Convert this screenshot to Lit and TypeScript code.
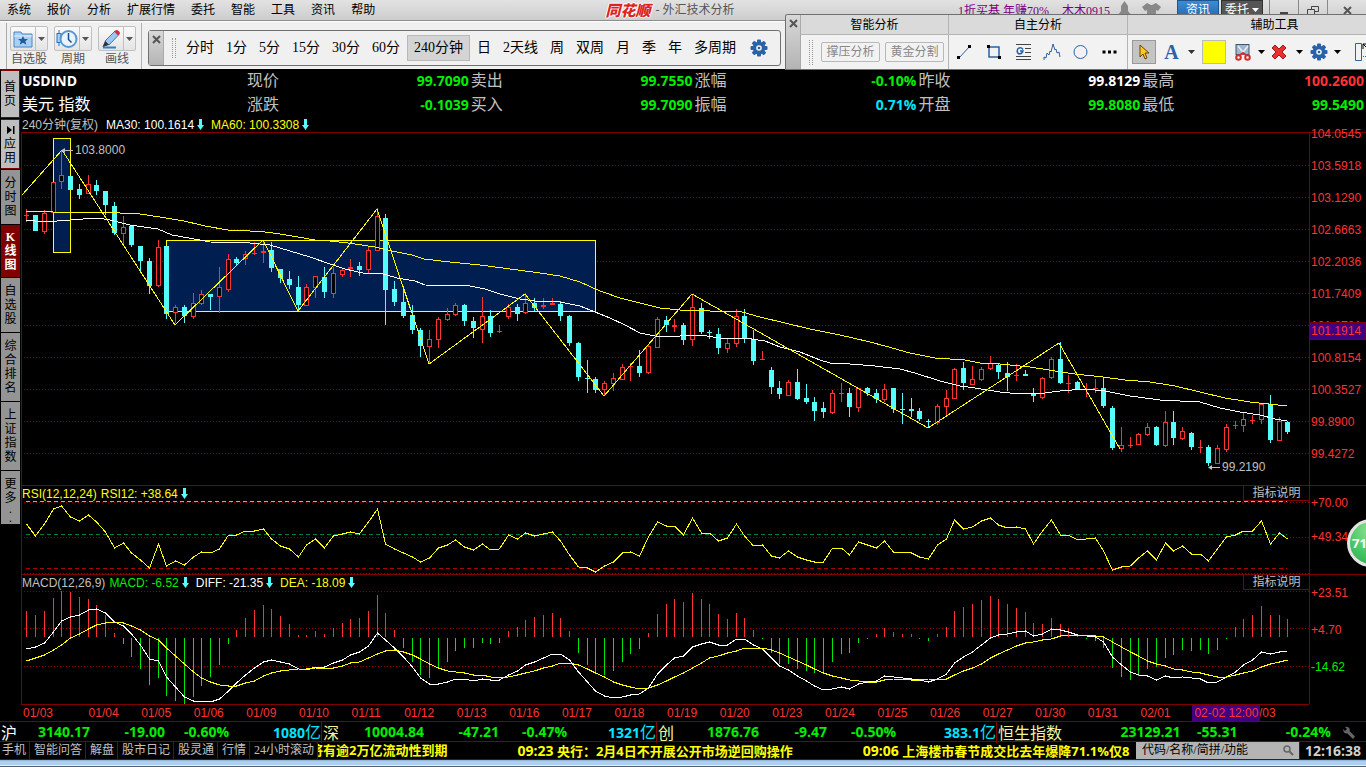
import { LitElement, html, svg, css } from "lit";
import { customElement } from "lit/decorators.js";
import { classMap } from "lit/directives/class-map.js";
import { styleMap } from "lit/directives/style-map.js";

/* Bar geometry shared by the three panes. */
const LEFT = 22;
const WIDTH = 1287;
const barX = (i: number) => Math.floor(26.75 + i * 8.757);

/* Each candle: rising flag, wick top, body top, body bottom, wick bottom. */
const CANDLES: number[][] = [
  [1,209,215,216,222],[0,215,215,231,231],[1,210,213,231,234],[1,182,182,212,212],[1,151,175,181,189],
  [0,176,176,190,190],[0,184,189,195,199],[1,175,184,193,193],[0,180,185,191,195],[0,191,191,205,215],
  [0,202,206,233,235],[1,216,227,233,246],[0,225,226,245,247],[0,246,246,261,272],[0,258,261,286,294],
  [1,240,247,285,287],[0,246,246,314,319],[1,305,307,312,323],[0,305,307,316,323],[1,293,303,316,319],
  [1,290,294,303,305],[0,294,294,297,310],[1,267,287,296,313],[1,254,259,289,292],[0,257,259,263,265],
  [1,251,254,258,265],[1,242,253,254,255],[1,240,251,253,263],[0,242,250,268,272],[0,269,269,278,283],
  [0,271,279,285,289],[0,276,287,305,310],[1,284,287,305,306],[1,276,276,287,298],[0,267,277,292,298],
  [1,267,273,293,298],[1,269,270,274,277],[1,259,267,269,277],[0,262,266,270,276],[1,247,250,269,274],
  [1,208,216,250,251],[0,214,218,290,325],[0,281,289,302,306],[0,286,302,316,318],[0,305,315,330,334],
  [0,328,330,346,357],[1,330,339,346,364],[1,317,319,339,348],[1,308,314,319,321],[1,303,305,314,316],
  [0,304,305,321,326],[0,317,321,328,338],[1,297,316,329,343],[0,310,316,333,337],[1,325,331,332,333],
  [1,304,307,316,319],[0,304,307,314,321],[1,293,303,312,314],[0,298,303,308,311],[1,298,305,307,309],
  [1,298,303,305,305],[0,301,304,316,321],[0,315,316,343,346],[0,342,343,377,381],[0,360,378,379,393],
  [0,377,379,390,393],[1,381,383,389,396],[1,373,378,383,391],[1,364,367,379,380],[1,363,366,367,381],
  [0,350,366,373,377],[1,344,346,372,374],[1,317,319,347,348],[0,316,320,325,332],[1,319,325,327,332],
  [0,323,325,340,345],[1,295,307,339,346],[0,303,308,332,334],[0,330,332,333,339],[0,328,334,348,354],
  [1,339,343,348,353],[1,309,316,343,347],[0,309,316,339,343],[0,330,339,361,365],[1,351,359,360,360],
  [0,367,370,387,394],[0,381,388,394,399],[1,380,382,395,395],[0,369,382,399,400],[0,384,398,402,404],
  [0,397,402,411,421],[0,402,408,412,418],[1,390,393,412,414],[1,383,393,394,402],[0,388,393,407,417],
  [1,388,388,407,412],[0,387,388,393,396],[0,389,393,399,403],[1,384,389,399,402],[0,388,388,409,413],
  [0,393,409,410,424],[0,398,409,411,417],[0,408,411,419,421],[0,419,421,422,427],[1,404,406,422,425],
  [1,390,398,406,416],[1,368,369,398,399],[0,362,368,383,390],[1,366,379,384,384],[1,367,369,379,381],
  [1,356,363,368,370],[0,363,365,372,379],[0,362,373,377,391],[1,364,375,376,381],[0,370,374,376,376],
  [0,388,394,396,402],[1,377,378,397,399],[1,357,359,377,379],[0,342,359,383,384],[1,375,383,384,393],
  [0,381,382,390,390],[1,383,389,390,397],[1,379,388,389,393],[0,377,388,406,408],[0,406,408,448,450],
  [1,427,445,448,452],[1,437,445,446,448],[1,433,434,444,444],[1,423,427,434,436],[0,426,427,445,446],
  [1,411,422,445,447],[0,411,422,438,445],[1,427,431,438,440],[0,432,433,447,450],[1,440,447,448,453],
  [0,445,447,463,466],[1,445,448,463,464],[1,424,427,449,452],[1,421,425,426,429],[1,413,419,425,432],
  [1,415,420,421,424],[1,403,404,419,424],[0,395,404,440,443],[1,417,421,440,441],[0,421,422,432,434],
];

const MA60 =
  "26,211 40,211 53,212 114,212 120,213 140,214 160,217 184,221 205,226 228,230 250,231 265,232 280,234 298,237 315,240 330,241 348,243 375,247 392,251 412,255 424,259 450,262 480,265 510,269 540,273 560,276 580,282 600,291 620,298 640,303 660,308 680,310 710,311 742,312 760,317 785,323 810,329 840,335 870,342 885,346 910,353 935,358 965,360 980,363 1000,364 1030,367 1055,371 1075,374 1103,377 1125,380 1150,382 1175,386 1200,392 1225,398 1250,402 1287,406";
const MA30 =
  "26,220 44,222 70,220 97,218 110,220 130,225 158,229 172,235 200,240 210,242 250,243 270,245 290,251 310,257 330,264 345,269 367,274 380,273 397,278 415,281 425,285 470,286 485,289 500,294 520,299 535,301 560,302 580,306 595,312 610,318 625,325 640,333 655,336 680,336 700,335 720,338 745,338 765,341 780,347 800,352 820,360 830,363 850,364 875,366 900,369 915,373 940,381 960,386 975,388 1000,392 1020,394 1045,393 1060,391 1085,389 1105,391 1130,396 1160,400 1200,402 1220,408 1240,412 1260,415 1275,419 1287,421";
const ZIGZAG =
  "22,195 62,150 175,325 263,240 298,311 377,209 429,364 525,294 604,396 692,294 928,428 1059,343 1120,449";

/* Indicator series: three units to a pixel, measured down from y = 480. */
const RSI = [132,169,132,86,77,111,124,106,126,156,203,190,219,239,265,193,257,244,254,230,217,220,206,164,166,154,154,148,178,197,206,232,196,178,203,167,163,157,163,125,86,192,206,219,232,247,233,203,196,181,201,211,191,211,208,166,178,160,169,163,157,184,226,262,265,276,257,247,220,217,229,172,127,139,139,166,115,160,160,184,175,133,169,199,196,229,235,214,231,239,247,247,205,205,226,187,196,205,184,217,217,220,232,238,196,176,119,148,142,124,115,136,145,142,146,193,152,119,166,166,181,178,175,214,271,262,259,233,214,241,190,214,199,223,223,244,208,170,166,154,154,124,193,160,176];
const HIST = [393,405,393,354,333,336,351,357,375,405,459,489,528,564,612,591,645,660,672,648,615,588,552,489,450,414,390,375,387,408,432,465,465,453,462,444,429,417,414,393,345,399,450,501,543,582,591,564,543,510,501,501,486,489,486,453,441,420,411,405,399,414,453,516,552,579,582,570,543,519,504,459,402,372,357,366,339,357,372,402,417,399,414,450,474,516,549,549,564,570,576,573,543,519,516,486,474,462,444,456,462,462,474,480,462,441,393,381,372,360,348,357,372,384,396,429,432,414,432,444,465,474,480,501,561,588,597,585,564,558,531,522,507,510,507,519,507,474,441,417,405,378,405,405,417];
const DIFF = [506,502,488,456,424,410,404,391,388,399,426,439,463,495,538,542,592,622,652,664,664,667,658,632,610,584,563,546,541,545,551,568,569,560,562,550,539,526,516,499,458,480,503,530,560,593,613,613,607,598,598,602,596,601,601,584,574,556,547,535,523,523,541,577,606,634,649,655,652,646,643,624,583,556,535,529,500,492,487,496,496,478,478,496,506,535,559,571,589,604,619,631,628,622,626,613,605,602,589,592,595,596,601,605,597,581,550,532,517,496,474,466,463,457,454,467,463,448,451,457,464,467,472,487,530,556,577,586,587,599,589,593,590,595,598,610,607,590,575,556,541,517,523,515,514];
const DEA = [542,533,524,509,494,475,462,448,436,428,427,430,437,449,467,479,503,527,553,575,594,607,616,619,618,610,602,589,580,572,569,568,568,565,565,563,557,550,545,535,521,512,510,515,524,537,551,564,572,577,580,586,586,590,593,590,586,580,574,565,559,550,550,556,566,579,592,606,616,622,626,625,616,604,592,578,563,548,535,529,520,514,505,505,505,511,520,530,542,554,567,580,589,595,601,604,605,605,601,598,598,599,599,598,598,596,586,574,565,551,535,523,511,499,490,485,481,476,469,466,466,466,467,472,486,500,515,529,542,553,559,566,571,575,580,586,590,590,586,580,574,562,553,547,541];

const levelY = (v: number) => 480 + Math.round(v / 3);
const series = (values: number[]) =>
  values.map((v, i) => `${barX(i) + 0.5},${levelY(v)}`).join(" ");

const dotted = (y: number) =>
  svg`<line class="dot" x1="24" x2="1309" y1=${y + 0.5} y2=${y + 0.5}></line>`;
const dashed = (y: number, cls: string) =>
  svg`<line class="dash ${cls}" x1="26" x2="1287" y1=${y + 0.5} y2=${y + 0.5}></line>`;

const candle = ([up, high, top, bottom, low]: number[], i: number) => {
  const x = barX(i);
  const flat = bottom - top <= 2;
  const body = up && !flat
    ? svg`<rect class="rise" x=${x - 1.5} y=${top + 0.5} width="4" height=${bottom - top}></rect>`
    : svg`<rect class=${up ? "rise-flat" : "fall"} x=${x - 2} y=${top} width="5" height=${bottom - top}></rect>`;
  return svg`<line class=${up ? "wick-up" : "wick-down"} x1=${x + 0.5} x2=${x + 0.5} y1=${high} y2=${low}></line>${body}`;
};

/* Cog with eight teeth. */
const gear = () => html`<svg class="icon" width="18" height="18" viewBox="-9 -9 18 18" aria-hidden="true">
  <g fill="#2a62a8">${[0, 45, 90, 135].map((a) => svg`<rect x="-2" y="-8.5" width="4" height="17" rx="1" transform="rotate(${a})"></rect>`)}
  <circle r="6.3"></circle></g><circle r="2.8" fill="#f4f4f4"></circle><circle r="1.3" fill="#2a62a8"></circle></svg>`;
const caret = () => html`<svg width="7" height="4" viewBox="0 0 7 4" aria-hidden="true"><path d="M0 0h7L3.5 4z" fill="currentColor"></path></svg>`;
const downArrow = () => html`<svg width="7" height="11" viewBox="0 0 7 11" aria-hidden="true"><path d="M2 0h3v6h2L3.5 11 0 6h2z" fill="#54fcfc"></path></svg>`;
const cross = () => html`<svg width="9" height="9" viewBox="0 0 9 9" aria-hidden="true"><path d="M1 1l7 7M8 1L1 8" stroke="#555" stroke-width="2"></path></svg>`;

const MENUS = ["系统", "报价", "分析", "扩展行情", "委托", "智能", "工具", "资讯", "帮助"];
const PERIODS = ["分时", "1分", "5分", "15分", "30分", "60分", "240分钟", "日", "2天线", "周", "双周", "月", "季", "年", "多周期"];
const TABS: [string, string][] = [
  ["首页", "light tall"], ["⏵应用", "light"], ["分时图", ""], ["K线图", "on"],
  ["自选股", ""], ["综合排名", ""], ["上证指数", ""], ["更多..", "more"],
];
const QUOTES = [
  ["现价", "99.7090", "green"], ["卖出", "99.7550", "green"], ["涨幅", "-0.10%", "green"], ["昨收", "99.8129", "white"], ["最高", "100.2600", "red"],
  ["涨跌", "-0.1039", "green"], ["买入", "99.7090", "green"], ["振幅", "0.71%", "cyan"], ["开盘", "99.8080", "green"], ["最低", "99.5490", "green"],
];
const PRICES = ["104.0545", "103.5918", "103.1290", "102.6663", "102.2036", "101.7409", "101.2781", "100.8154", "100.3527", "99.8900", "99.4272"];
const DATES = ["01/03", "01/04", "01/05", "01/06", "01/09", "01/10", "01/11", "01/12", "01/13", "01/16", "01/17", "01/18", "01/19", "01/20", "01/23", "01/24", "01/25", "01/26", "01/27", "01/30", "01/31", "02/01", "02/02", "02/03"];
const INDICES = [
  { name: "沪", tone: "white", cells: ["3140.17", "-19.00", "-0.60%"], vol: "1080", cols: "90fr 75fr 64fr 92fr" },
  { name: "深", tone: "pale", cells: ["10004.84", "-47.21", "-0.47%"], vol: "1321", cols: "102fr 75fr 68fr 89fr" },
  { name: "创", tone: "pale", cells: ["1876.76", "-9.47", "-0.50%"], vol: "383.1", cols: "102fr 68fr 69fr 100fr" },
  { name: "恒生指数", tone: "pale", cells: ["23129.21", "-55.31", "-0.24%"], vol: "", cols: "183fr 57fr 93fr 35fr" },
];
const LINKS = ["手机", "智能问答", "解盘", "股市日记", "股灵通", "行情", "24小时滚动"];

@customElement("app-root")
export class AppRoot extends LitElement {
  static styles = css`
    :host {
      display: block;
      background: #000;
      color: #c0c0c0;
      font: 12px/16px "Liberation Sans", "Noto Sans CJK SC", sans-serif;
      overflow: hidden;
    }
    * { box-sizing: border-box; }
    button { font: inherit; color: inherit; background: none; border: 0; padding: 0; margin: 0; }
    a { color: inherit; text-decoration: none; }
    svg { display: block; }
    .page { position: relative; display: flex; flex-direction: column; min-height: 100vh; overflow: hidden; }
    .green { color: #00ee00; } .red { color: #ff3232; } .cyan { color: #00e5ff; }
    .white { color: #fff; } .pale { color: #f4f49c; } .yellow { color: #ffff00; } .grey { color: #c0c0c0; }

    /* title bar */
    .top { display: flex; justify-content: space-between; height: 21px; background: linear-gradient(#e2e2e2, #cdcdcd); border-bottom: 1px solid #8c8c8c; color: #000;
      font-family: "Liberation Serif", "Noto Sans CJK SC", serif; }
    .menus { display: flex; gap: 16px; padding: 2px 7px; flex: 1; }
    .title { display: flex; gap: 5px; color: #555; align-items: center; margin-right: 40px; }
    .logo { font: italic 900 15px/18px "Noto Sans CJK SC", sans-serif; color: #dc2420; text-shadow: 1px 0 #fff, -1px 0 #fff, 0 1px #fff, 0 -1px #fff; }
    .sys { display: flex; flex: 1; justify-content: flex-end; align-items: flex-start; }
    .promo { color: #800080; padding: 3px 0; margin-right: 13px; white-space: nowrap; }
    .account { margin-right: 8px; }
    .shirt { margin: 0 16px 0 11px; }
    .badge { height: 20px; width: 42px; color: #fff; margin-right: 2px; background: linear-gradient(#3f8bd0, #2265ab); border: 1px solid #1c5590; }
    .badge.dark { background: #555; border-color: #333; display: flex; align-items: center; justify-content: center; gap: 3px; }
    .win { width: 29px; height: 21px; border-left: 1px solid #888; display: grid; place-items: center; }
    .win.first { margin-left: 4px; }
    .win.last { width: 39px; }

    /* tool bar */
    .tools { display: flex; height: 48px; background: #f0f0f0; color: #000; padding-top: 1px; border-top: 1px solid #fff; }
    .groups { display: flex; gap: 6px; padding: 3px 5px 0 3px; margin-left: 6px; border-left: 1px solid #aaa; border-right: 1px solid #b4b4b4; }
    .group { display: flex; flex-direction: column; align-items: center; color: #555; line-height: 17px; }
    .split { display: flex; width: 38px; height: 25px; border: 1px solid #c0c0c0; border-radius: 2px; background: linear-gradient(#fafafa, #e4e4e4); }
    .split button { flex: 1; display: grid; place-items: center; }
    .split button:first-child { flex: 0 0 25px; border-right: 1px solid #c0c0c0; }
    .periods { display: flex; align-items: center; height: 36px; margin: 7px 0 0 6px; border: 1px solid #707070; border-radius: 3px; font: 14px/22px "Liberation Serif", "Noto Sans CJK SC", serif; padding-right: 12px; }
    .close { flex: none; align-self: stretch; width: 15px; background: linear-gradient(#d8d8d8, #b4b4b4); border-right: 1px solid #aaa; display: flex; justify-content: center; padding-top: 4px; }
    .grip { width: 4px; height: 20px; margin: 0 4px 0 8px; border: dotted #999; border-width: 0 1px; }
    .period { padding: 0 6px; height: 26px; white-space: nowrap; }
    .period.on { background: #d4d4d4; border: 1px solid #b8b8b8; margin: 0 1px; }
    .cog { margin-left: 8px; }

    /* drawing palette, floats over the title and tool bars */
    .palette { position: absolute; right: 0; top: 14px; width: 581px; height: 56px; display: flex; overflow: hidden; background: #f2f2f2; color: #000; border: 1px solid #707070; border-right: 0; border-radius: 3px 0 0 0;
      font-family: "Liberation Serif", "Noto Sans CJK SC", serif; }
    .sec { flex: none; border-right: 1px solid #b4b4b4; }
    .sec h2 { margin: 0; font: inherit; line-height: 20px; text-align: center; background: #dadada; border-bottom: 1px solid #b4b4b4; height: 20px; }
    .sec.a { width: 148px; } .sec.b { width: 179px; } .sec.c { width: 294px; }
    .row { display: flex; align-items: center; height: 34px; }
    .a .row { gap: 5px; } .a .grip { margin: 0 3px 0 8px; height: 25px; }
    .ghost { border: 1px solid #b8b8b8; border-radius: 2px; color: #888; width: 59px; height: 20px; line-height: 16px; }
    .b .row { gap: 11px; padding-left: 7px; }
    .c .row { padding-left: 4px; }
    .c button { display: grid; place-items: center; height: 24px; }
    .pick { width: 24px; background: #c4c4c4; border: 1px solid #999; }
    .letter { width: 31px; font: bold 20px/20px "Liberation Serif", serif; color: #2a62a8; }
    .swatch { width: 24px; margin: 0 7px; background: #ff0; border: 1px solid #bbb; }
    .drop { width: 8px; color: #333; }
    .w16 { width: 16px; } .w20 { width: 20px; }
    .ruler { margin-left: 10px; }

    /* main area */
    .body { display: flex; }
    .tabs { display: flex; flex-direction: column; gap: 1px; width: 21px; flex: none; padding-left: 1px; border-top: 1px solid #800000; }
    .tab { width: 19px; padding: 6px 0; background: #949494; color: #000; line-height: 14px; }
    .tab span { display: block; height: 14px; }
    .tab.light { background: #bebebe; border: 1px solid #800000; border-left: 0; padding: 3px 0; }
    .tab.tall { padding: 9px 0; }
    .tab.on { background: #800000; color: #fff; font-family: "Liberation Serif", "Noto Sans CJK SC", serif; font-weight: bold; padding: 5px 0; }
    .tab.more span:nth-child(n+3) { height: 9px; line-height: 9px; }
    .tab.more { padding-bottom: 1px; }
    .view { flex: 1; min-width: 0; }
    .quotes { display: grid; grid-template-columns: 225px repeat(5, 1fr); padding-left: 1px; font-size: 16px; line-height: 24px; }
    .name { color: #fff; }
    .name.code { font: bold 14px/24px "Open Sans", sans-serif; }
    .quote { display: flex; justify-content: space-between; padding-right: 2px; }
    .num { font: bold 14px/24px "Open Sans", sans-serif; }
    .legend { display: flex; align-items: center; height: 15px; padding-left: 1px; white-space: nowrap; }
    .legend.over { position: absolute; left: 0; top: 0; padding: 0; }
    .legend span { display: flex; align-items: center; gap: 3px; margin-right: 7px; }
    .legend .tight { margin-right: 4px; }
    .legend .wide { margin-right: 8px; }
    .pane { display: grid; grid-template-columns: 1fr 57px; border-top: 1px solid #800000; border-left: 1px solid #800000; }
    .plot { position: relative; min-width: 0; }
    .plot > svg { width: 100%; height: 100%; shape-rendering: crispEdges; }
    .price { height: 353px; } .rsi { height: 89px; } .macd { height: 130px; }
    .axis { border-left: 1px solid #800000; position: relative; color: #ff3232; padding-left: 1px; }
    .axis span { display: block; }
    .price .axis { margin-top: -16px; border: 0; padding-left: 2px; line-height: 34px; }
    .price .axis span { height: 32px; }
    .price .plot { border-right: 1px solid #800000; margin-right: -1px; }
    .rsi .axis span { line-height: 34px; }
    .macd .axis span { line-height: 37px; }
    .price .axis .cursor { position: absolute; left: 0; right: 0; top: 205px; height: 18px; line-height: 16px; padding-left: 1px; background: #400080; border: 1px solid #800000; }
    .help { position: absolute; right: 0; top: 0; width: 66px; height: 15px; border-left: 1px solid #800000; border-bottom: 1px solid #800000; line-height: 14px; background: #000; }
    .note { position: absolute; line-height: 14px; display: flex; align-items: center; gap: 2px; }
    .dates { display: flex; position: relative; height: 17px; margin-right: 57px; padding-left: 2px; border: 1px solid #800000; border-width: 1px 0 0 0; color: #ff3232; line-height: 17px; }
    .dates span { flex: 0 0 4.09%; }
    .dates span:first-child { flex-basis: 5.1%; }
    .dates .cursor { position: absolute; left: 90.95%; top: 0; width: 68px; height: 16px; background: #400080; text-align: center; white-space: nowrap; font-weight: normal; }

    .dot { stroke: #900000; stroke-dasharray: 1 2; }
    .dash { stroke-dasharray: 4 3; }
    .dash.c { stroke: #30e0f0; } .dash.g { stroke: #008040; } .dash.r { stroke: #b00000; }
    .zone { fill: #001f50; stroke: #ffff00; }
    .rise { fill: #000; stroke: #ff3232; }
    .rise-flat { fill: #ff3232; } .fall { fill: #54fcfc; }
    .wick-up, .bar-up { stroke: #ff3232; } .wick-down { stroke: #54fcfc; } .bar-down { stroke: #00e600; }
    .ly { fill: none; stroke: #ffff00; } .lw { fill: none; stroke: #fff; }

    /* index strip and footer */
    .indices { display: grid; grid-template-columns: 322fr 335fr 340fr 369fr; height: 20px; border-top: 1px solid #800000; }
    .index { display: grid; position: relative; border-right: 1px solid #800000; font: bold 14px/20px "Open Sans", sans-serif; text-align: right; white-space: nowrap; }
    .index:last-child { border: 0; }
    .index .label { position: absolute; left: 1px; font: 16px/20px "Noto Sans CJK SC", sans-serif; }
    .unit { font: 16px/19px "Noto Sans CJK SC", sans-serif; }
    .wrench { justify-self: center; align-self: center; }
    .foot { display: flex; height: 19px; border: 1px solid #800000; border-width: 1px 0; font-family: "Liberation Serif", "Noto Sans CJK SC", serif; line-height: 17px; }
    .foot a { flex: none; padding: 0 3px 0 4px; border-right: 1px solid #800000; white-space: nowrap; }
    .foot a:first-child { padding-left: 2px; }
    .ticker { flex: 1; min-width: 0; overflow: hidden; display: flex; gap: 70px; color: #ff0; font: bold 13px/17px "Open Sans", "Noto Sans CJK SC", sans-serif; white-space: nowrap; }
    .ticker span { flex: none; } .ticker span:first-child { margin-left: -8px; }
    .ticker time { font-size: 14px; }
    .search { flex: none; width: 163px; display: flex; align-items: center; background: #b4b4b4; padding: 0 5px 0 6px; }
    .search input { flex: 1; min-width: 0; border: 0; padding: 0; background: none; font: inherit; outline: 0; height: 17px; }
    .search input::placeholder { color: #000; opacity: 1; }
    .clock { flex: none; width: 67px; border-left: 1px solid #800000; font: bold 14px/17px "Open Sans", sans-serif; color: #d0d0d0; text-align: center; }
    .strip { height: 7px; background: linear-gradient(#8fb0d0, #b4d2f2 2px, #a8cbee 5px, #e8f0f8 5px); border-bottom: 1px solid #506070; }
    .ball { position: absolute; right: -29px; top: 519px; width: 48px; height: 48px; border-radius: 50%; border: 3px solid #e4e4e4; background: radial-gradient(circle at 50% 20%, #90e490, #44c464 60%, #2cac50); color: #fff; font: bold 13px/42px "Open Sans", sans-serif; text-align: left; padding-left: 2px; }
  `;

  private split(label: string, icon: unknown) {
    return html`<div class="group">
      <div class="split"><button aria-label=${label}>${icon}</button><button aria-label="${label}菜单">${caret()}</button></div>
      <span>${label}</span>
    </div>`;
  }

  private renderTop() {
    return html`<header class="top">
      <nav class="menus">${MENUS.map((m) => html`<button>${m}</button>`)}</nav>
      <div class="title"><span class="logo">同花顺</span><span>- 外汇技术分析</span></div>
      <div class="sys">
        <a class="promo" href="#">1折买基 年赚70%</a><a class="promo account" href="#">木木0915</a>
        <svg width="13" height="16" viewBox="0 0 13 16" aria-hidden="true"><path d="M6.500 1L10 6v5l3 4H0l3-4V6z" fill="#888"></path></svg>
        <svg class="shirt" width="19" height="16" viewBox="0 0 19 16" aria-hidden="true"><path d="M5 3l2 1q2.500 2 5 0l2-1 5 4-3 4-2-1v6H5v-6l-2 1-3-4z" fill="#888"></path></svg>
        <button class="badge">资讯</button><button class="badge dark">委托${caret()}</button>
        <button class="win first" aria-label="最小化"><svg width="10" height="10" viewBox="0 0 10 10"><path d="M1 7h8" stroke="#444" stroke-width="2"></path></svg></button>
        <button class="win" aria-label="还原"><svg width="12" height="10" viewBox="0 0 12 10"><path d="M4.500 3V.5h7v5H8M.5 3.500h7v5h-7z" fill="none" stroke="#444"></path></svg></button>
        <button class="win last" aria-label="关闭">${cross()}</button>
      </div>
    </header>`;
  }

  private renderTools() {
    const folder = html`<svg width="20" height="18" viewBox="0 0 20 18"><path d="M1 2h7l1 2h10v13H1z" fill="#a9d0f4" stroke="#4a86c0"></path><path d="M1 6h18" stroke="#e4f2ff"></path><path d="M10 6l1.500 3h3.500l-2.700 2.300 1 3.500L10 12.800l-3.300 2 1-3.500L5 9h3.500z" fill="#1f5c9c"></path></svg>`;
    const clock = html`<svg width="22" height="20" viewBox="0 0 22 20"><path d="M3 1v4M3 13v4" stroke="#2a72b8"></path><rect x="1" y="4.500" width="4" height="9" fill="#a9d0f4" stroke="#2a72b8"></rect><circle cx="12.500" cy="10" r="8" fill="#e8f4ff" stroke="#5a96d0" stroke-width="2"></circle><path d="M12.500 4v6.500l3 3" fill="none" stroke="#1f4c84" stroke-width="1.500"></path></svg>`;
    const pencil = html`<svg width="22" height="20" viewBox="0 0 22 20"><path d="M3 18.500h13" stroke="#2a82d0" stroke-width="2"></path><path d="M5 12L15 2l4 3.500L9 16z" fill="#9cc8f0" stroke="#4a78a8"></path><path d="M14 2.500l2-1.500q3.500 0 4 3.500l-2 2z" fill="#d83030"></path><path d="M5 12l4 4-6.500 2z" fill="#333"></path></svg>`;
    return html`<div class="tools">
      <div class="groups">${this.split("自选股", folder)}${this.split("周期", clock)}${this.split("画线", pencil)}</div>
      <div class="periods">
        <button class="close" aria-label="关闭">${cross()}</button><i class="grip"></i>
        ${PERIODS.map((p) => html`<button class=${classMap({ period: true, on: p === "240分钟" })}>${p}</button>`)}
        <button class="cog" aria-label="设置">${gear()}</button>
      </div>
    </div>`;
  }

  private renderPalette() {
    return html`<aside class="palette">
      <button class="close" aria-label="关闭">${cross()}</button>
      <section class="sec a"><h2>智能分析</h2><div class="row"><i class="grip"></i><button class="ghost">撑压分析</button><button class="ghost">黄金分割</button></div></section>
      <section class="sec b"><h2>自主分析</h2><div class="row">
        <button aria-label="线段"><svg width="18" height="18" viewBox="0 0 18 18"><path d="M3 15L14 3" stroke="#2a62a8"></path><path d="M1 13h3v3H1zM12 2h3v3h-3z" fill="#000"></path></svg></button>
        <button aria-label="矩形"><svg width="18" height="18" viewBox="0 0 18 18"><rect x="4" y="4" width="10" height="10" fill="none" stroke="#2a62a8" stroke-width="1.500"></rect><path d="M2 2h3v3H2zM13 13h3v3h-3z" fill="#000"></path></svg></button>
        <button aria-label="黄金分割线"><svg width="18" height="18" viewBox="0 0 18 18"><path d="M2 1.500h15M11 5.500h6M11 9.500h6M2 13.500h15M2 16.500h15" stroke="#444"></path><path d="M9 6.500Q7 3.500 4 5.500q-2 4 1 5.500 3 0 4-3H6" fill="none" stroke="#2a62a8" stroke-width="1.500"></path></svg></button>
        <button aria-label="波浪"><svg width="18" height="18" viewBox="0 0 18 18"><path d="M1 17v-3l2 1 1-5 2 2 1-4 1 1 2-8 2 6 1-1 1 4 2-1 1 5" fill="none" stroke="#2a62a8"></path></svg></button>
        <button aria-label="圆"><svg width="18" height="18" viewBox="0 0 18 18"><circle cx="8.500" cy="9" r="6.500" fill="none" stroke="#2a62a8"></circle></svg></button>
        <button aria-label="更多"><svg width="18" height="18" viewBox="0 0 18 18"><path d="M1.500 7.500h3v3h-3zM7 7.500h3v3H7zM12.500 7.500h3v3h-3z" fill="#000"></path></svg></button>
      </div></section>
      <section class="sec c"><h2>辅助工具</h2><div class="row">
        <button class="pick" aria-label="选择"><svg width="14" height="18" viewBox="0 0 14 18"><path d="M3 2v12l3-3 2 5 2-1-2-5h4z" fill="#ffc820" stroke="#664400"></path></svg></button>
        <button class="letter">A</button><button class="drop" aria-label="文字菜单">${caret()}</button>
        <button class="swatch" aria-label="颜色"></button>
        <button class="w20" aria-label="剪切"><svg width="18" height="18" viewBox="0 0 18 18"><rect x="2" y="1.500" width="13" height="10" fill="#9ab8d4" stroke="#456"></rect><path d="M4 3l8 10M14 3L6 13" stroke="#eee" stroke-width="1.500"></path><path d="M6 12l3-2 3 2" fill="none" stroke="#d03030" stroke-width="2"></path><circle cx="4.500" cy="14.500" r="2.300" fill="none" stroke="#d03030" stroke-width="2"></circle><circle cx="13.500" cy="14.500" r="2.300" fill="none" stroke="#d03030" stroke-width="2"></circle></svg></button><button class="w16" aria-label="剪切菜单">${caret()}</button>
        <button class="w20" aria-label="删除"><svg width="18" height="18" viewBox="0 0 18 18"><path d="M2 5l3-3 4 4 4-4 3 3-4 4 4 4-3 3-4-4-4 4-3-3 4-4z" fill="#e83030" stroke="#a01818"></path></svg></button><button class="w20" aria-label="删除菜单">${caret()}</button>
        <button class="w20" aria-label="设置">${gear()}</button><button class="w16" aria-label="设置菜单">${caret()}</button>
        <svg class="ruler" width="18" height="20" viewBox="0 0 18 20" aria-hidden="true"><path d="M.5 1.500h6v17h-6z" fill="none" stroke="#2a62a8"></path><path d="M6 14.500h12" stroke="#2a62a8" stroke-dasharray="1 1"></path><path d="M8 2h5M8 2v5M8 2l6 6" stroke="#000"></path></svg>
      </div></section>
    </aside>`;
  }

  private renderPricePane() {
    return html`<div class="pane price">
      <div class="plot">
        <svg viewBox="22 133 1287 352" preserveAspectRatio="none">
          ${Array.from({ length: 10 }, (_, k) => dotted(165 + k * 32))}
          <rect class="zone" x="53.500" y="138.500" width="17" height="114"></rect>
          <rect class="zone" x="166.500" y="240.500" width="429" height="71"></rect>
          ${CANDLES.map(candle)}
          <polyline class="ly" points=${MA60}></polyline>
          <polyline class="lw" points=${MA30}></polyline>
          <polyline class="ly" points=${ZIGZAG}></polyline>
        </svg>
        <span class="note" style=${styleMap({ left: `${((61 - LEFT) / WIDTH) * 100}%`, top: "10px" })}>${this.pointer()}103.8000</span>
        <span class="note" style=${styleMap({ left: `${((1208 - LEFT) / WIDTH) * 100}%`, top: "327px" })}>${this.pointer()}99.2190</span>
      </div>
      <div class="axis">${PRICES.map((p) => html`<span>${p}</span>`)}<span class="cursor">101.1914</span></div>
    </div>`;
  }

  private pointer() {
    return html`<svg width="12" height="7" viewBox="0 0 12 7" aria-hidden="true"><path d="M0 3.500L4 1v5z" fill="#c0c0c0"></path><path d="M2 3.500h10" stroke="#c0c0c0"></path></svg>`;
  }

  private renderRsiPane() {
    return html`<div class="pane rsi">
      <div class="plot">
        <svg viewBox="22 486 1287 88" preserveAspectRatio="none">
          ${[502, 537, 573].map(dotted)}${dashed(501, "c")}${dashed(534, "g")}${dashed(568, "r")}
          <polyline class="ly" points=${series(RSI)}></polyline>
        </svg>
        <div class="legend over yellow"><span class="tight">RSI(12,12,24)</span><span>RSI12: +38.64${downArrow()}</span></div>
        <button class="help">指标说明</button>
      </div>
      <div class="axis"><span>+70.00</span><span>+49.34</span></div>
    </div>`;
  }

  private renderMacdPane() {
    return html`<div class="pane macd">
      <div class="plot">
        <svg viewBox="22 575 1287 129" preserveAspectRatio="none">
          ${[591, 628, 666].map(dotted)}
          ${HIST.map((v, i) => {
            const down = v > 471;
            const x = barX(i) + 0.5;
            return svg`<line class=${down ? "bar-down" : "bar-up"} x1=${x} x2=${x} y1=${down ? 638 : 637} y2=${levelY(v) + (down ? 1 : 0)}></line>`;
          })}
          <polyline class="lw" points=${series(DIFF)}></polyline>
          <polyline class="ly" points=${series(DEA)}></polyline>
        </svg>
        <div class="legend over"><span class="tight">MACD(12,26,9)</span><span class="green">MACD: -6.52${downArrow()}</span><span class="white">DIFF: -21.35${downArrow()}</span><span class="yellow">DEA: -18.09${downArrow()}</span></div>
        <button class="help">指标说明</button>
      </div>
      <div class="axis"><span>+23.51</span><span>+4.70</span><span class="green">-14.62</span></div>
    </div>`;
  }

  private renderFooter() {
    return html`<div class="indices">${INDICES.map((x) => html`<div class="index green" style=${styleMap({ "grid-template-columns": x.cols })}>
        <span class="label ${x.tone}">${x.name}</span>${x.cells.map((c) => html`<span>${c}</span>`)}
        ${x.vol
          ? html`<span class="cyan">${x.vol}<span class="unit">亿</span></span>`
          : html`<svg class="wrench" width="13" height="13" viewBox="0 0 13 13" aria-hidden="true"><path d="M1 3l2 2 2-2-2-2q3-1 4.500 1.500.5 1 0 2.500L13 10.500 11 13 5.500 7.500Q1.500 8 1 3z" fill="#666"></path></svg>`}
      </div>`)}</div>
      <footer class="foot">
        ${LINKS.map((l) => html`<a href="#">${l}</a>`)}
        <div class="ticker"><span>将有逾2万亿流动性到期</span><span><time>09:23</time> 央行：2月4日不开展公开市场逆回购操作</span><span><time>09:06</time> 上海楼市春节成交比去年爆降71.1%仅8</span></div>
        <label class="search"><input type="text" aria-label="代码/名称/简拼/功能" placeholder="代码/名称/简拼/功能" />
          <svg width="11" height="11" viewBox="0 0 11 11" aria-hidden="true"><circle cx="4" cy="4" r="3" fill="none" stroke="#666" stroke-width="1.500"></circle><path d="M6 6l4 4" stroke="#666" stroke-width="2"></path></svg></label>
        <time class="clock">12:16:38</time>
      </footer>
      <div class="strip"></div>`;
  }

  private tabGlyph(c: string) {
    return c === "⏵"
      ? html`<span><svg width="18" height="14" viewBox="0 0 18 14" aria-hidden="true"><path d="M6 3l5 4-5 4zM12 3h1.500v8H12z" fill="#000"></path></svg></span>`
      : html`<span>${c}</span>`;
  }

  render() {
    return html`<div class="page">
      ${this.renderTop()}${this.renderTools()}${this.renderPalette()}
      <main class="body">
        <nav class="tabs">${TABS.map(([t, cls]) => html`<button class="tab ${cls}">${[...t].map((c) => this.tabGlyph(c))}</button>`)}</nav>
        <div class="view">
          <div class="quotes">
            ${[0, 1].map((r) => html`<div class="name ${r ? "" : "code"}">${r ? "美元 指数" : "USDIND"}</div>
              ${QUOTES.slice(r * 5, r * 5 + 5).map(([k, v, c]) => html`<div class="quote"><span>${k}</span><span class="num ${c}">${v}</span></div>`)}`)}
          </div>
          <div class="legend"><span class="wide">240分钟(复权)</span><span class="white">MA30: 100.1614${downArrow()}</span><span class="yellow">MA60: 100.3308${downArrow()}</span></div>
          ${this.renderPricePane()}${this.renderRsiPane()}${this.renderMacdPane()}
          <div class="dates">${DATES.map((d) => html`<span>${d}</span>`)}<b class="cursor">02-02 12:00</b></div>
        </div>
      </main>
      ${this.renderFooter()}
      <button class="ball">71</button>
    </div>`;
  }
}
